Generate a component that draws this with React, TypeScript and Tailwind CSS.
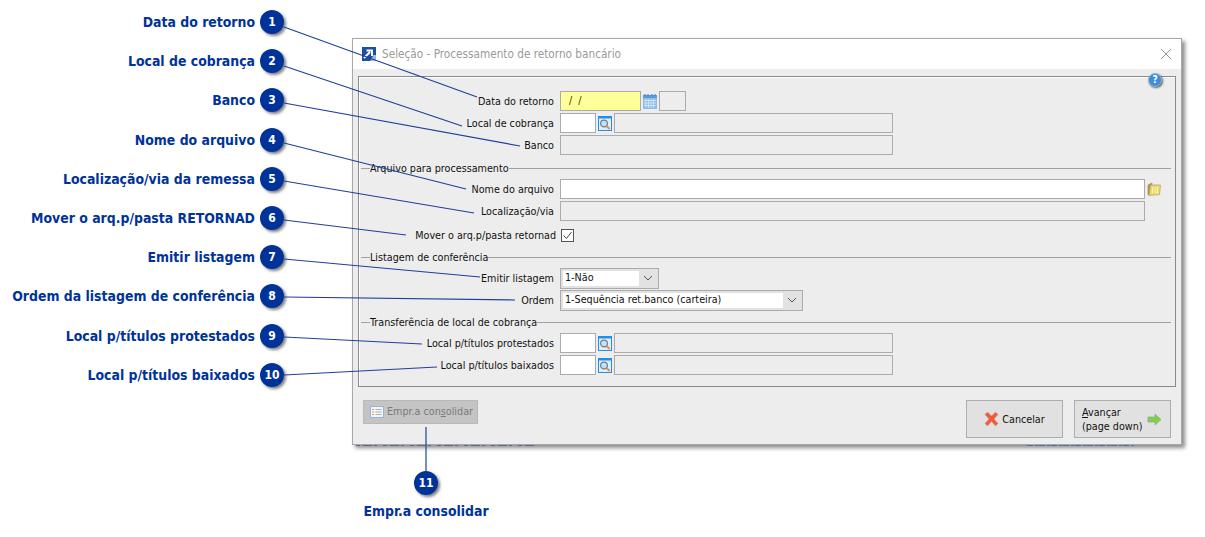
import React from "react";

const callouts = [
  "Data do retorno",
  "Local de cobrança",
  "Banco",
  "Nome do arquivo",
  "Localização/via da remessa",
  "Mover o arq.p/pasta RETORNAD",
  "Emitir listagem",
  "Ordem da listagem de conferência",
  "Local p/títulos protestados",
  "Local p/títulos baixados",
];

const lines = [
  [284, 27, 477, 97],
  [284, 66, 462, 126],
  [284, 103, 520, 146],
  [284, 143, 466, 189],
  [284, 181, 474, 213],
  [284, 220, 406, 235],
  [284, 259, 480, 277],
  [284, 297, 515, 300],
  [284, 337, 422, 344],
  [284, 375, 437, 367],
  [426, 427, 426, 471],
];

function Badge({ n }: { n: number }) {
  return (
    <div className="flex h-[24px] w-[24px] shrink-0 items-center justify-center rounded-full bg-[#003399] text-[12px] font-bold text-white shadow-[2px_2px_3px_rgba(0,0,0,0.5)]">
      {n}
    </div>
  );
}

function Calendar() {
  return (
    <svg width="14" height="15" viewBox="0 0 14 15" className="shrink-0">
      <rect x="0" y="1" width="14" height="14" fill="#8fbbe8" />
      <rect x="0" y="1" width="14" height="3" fill="#5a9bdc" />
      <path d="M2 0v2M5 0v2M9 0v2M12 0v2" stroke="#3f7fc4" strokeWidth="1" />
      <path d="M3 5v9M5.500 5v9M8 5v9M10.500 5v9M1 6.500h12M1 9h12M1 11.500h12" stroke="#d6e8fa" strokeWidth="0.800" />
    </svg>
  );
}

function Search() {
  return (
    <svg width="14" height="15" viewBox="0 0 14 15" className="shrink-0">
      <rect x="0.500" y="0.500" width="13" height="14" fill="#e6eef5" stroke="#1e90f0" />
      <rect x="1" y="1" width="12" height="1.500" fill="#1e90f0" />
      <circle cx="6" cy="7.500" r="3.400" fill="#c5e2f5" stroke="#6f7f8c" strokeWidth="1.200" />
      <path d="M8.500 10l3.200 3" stroke="#f08a3c" strokeWidth="2" />
    </svg>
  );
}

function Folder() {
  return (
    <svg width="14" height="14" viewBox="0 0 14 14" className="shrink-0">
      <path d="M1 3l4-2v10.500L1 13z" fill="#b8973a" stroke="#8d8d70" strokeWidth="0.600" />
      <path d="M2 13.500L3.500 3h10l-1 9.500z" fill="#f3d867" stroke="#a8a27a" strokeWidth="0.700" />
      <path d="M5.500 5v6.500M8 5v6.500M10.500 5v6.500" stroke="#fbf3c0" strokeWidth="1" />
    </svg>
  );
}

function Help() {
  return (
    <div className="flex h-[14px] w-[14px] items-center justify-center rounded-full border border-[#9db4cc] bg-[#3f8ede] text-[10px] font-bold leading-none text-white shadow-[1px_1px_2px_rgba(0,0,0,0.6)]">
      ?
    </div>
  );
}

function Chevron() {
  return (
    <svg width="10" height="6" viewBox="0 0 10 6">
      <path d="M1 1l4 4 4-4" fill="none" stroke="#555555" strokeWidth="1" />
    </svg>
  );
}

const fieldBase = "h-[20px] border border-[#ababab]";

function Row({ label, children, className = "" }: { label: string; children?: React.ReactNode; className?: string }) {
  return (
    <div className={`flex h-[20px] items-center ${className}`}>
      <div className="w-[195px] shrink-0 whitespace-nowrap pt-[2px] text-right">{label}</div>
      <div className="ml-[6px] flex items-center">{children}</div>
    </div>
  );
}

function Legend({ label, className = "" }: { label: string; className?: string }) {
  return (
    <div className={`flex h-[14px] items-center pl-[2px] pr-[4px] ${className}`}>
      <div className="h-px w-[9px] bg-[#a0a0a0]" />
      <div className="whitespace-nowrap pt-[2px]">{label}</div>
      <div className="h-px flex-1 bg-[#a0a0a0]" />
    </div>
  );
}

function Lookup() {
  return (
    <>
      <div className={`${fieldBase} w-[36px] bg-white`} />
      <div className="ml-[2px]"><Search /></div>
      <div className={`${fieldBase} ml-[2px] w-[279px]`} />
    </>
  );
}

export default function App() {
  return (
    <div
      className="relative flex h-[537px] w-[1205px] overflow-hidden bg-white text-[#111111]"
      style={{ fontFamily: '"DejaVu Sans Condensed", "DejaVu Sans", sans-serif' }}
    >
      <div className="flex w-[284px] shrink-0 flex-col gap-[15.2px] pt-[10px]">
        {callouts.map((c, i) => (
          <div key={c} className="flex h-[24px] items-center justify-end gap-[5px]">
            <span className="whitespace-nowrap pt-[1px] text-[13.9px] font-bold text-[#003399]">{c}</span>
            <Badge n={i + 1} />
          </div>
        ))}
      </div>

      <div className="ml-[68px] mt-[38px] flex flex-col">
        <div className="flex h-[407px] w-[830px] flex-col border border-[#a8a8a8] bg-[#ededed] text-[10.7px] shadow-[3px_3px_4px_rgba(0,0,0,0.45)]">
          <div className="flex h-[30px] shrink-0 items-center bg-white pl-[9px] pr-[9px]">
            <svg width="14" height="14" viewBox="0 0 14 14">
              <rect width="14" height="14" fill="#1c4fa0" />
              <path d="M8 14l3-5 3 5zM11 8h3v6h-3z" fill="#9fb6d8" />
              <path d="M2 11l6-6M4.500 3.500H10V9" stroke="#ffffff" strokeWidth="2" fill="none" />
            </svg>
            <span className="ml-[6px] pt-[1px] text-[11.7px] text-[#9a9a9a]">Seleção - Processamento de retorno bancário</span>
            <svg width="12" height="12" viewBox="0 0 12 12" className="ml-auto">
              <path d="M1 1l10 10M11 1L1 11" stroke="#8a8a8a" strokeWidth="0.900" />
            </svg>
          </div>

          <div className="relative mx-[5px] mt-[7px] h-[311px] shrink-0 border border-[#8a8a8a] pt-[14px] shadow-[inset_1px_1px_0_#ffffff]">
            <div className="absolute right-[13px] top-[-4px]"><Help /></div>

            <Row label="Data do retorno">
              <div className={`${fieldBase} flex w-[81px] items-center whitespace-pre bg-[#ffff99] pl-[8px] pt-[1px] text-[#3a3a00]`}>/  /</div>
              <div className="ml-[2px]"><Calendar /></div>
              <div className={`${fieldBase} ml-[2px] w-[27px]`} />
            </Row>
            <Row label="Local de cobrança" className="mt-[2px]"><Lookup /></Row>
            <Row label="Banco" className="mt-[2px]">
              <div className={`${fieldBase} w-[333px]`} />
            </Row>

            <Legend label="Arquivo para processamento" className="mt-[6px]" />
            <Row label="Nome do arquivo" className="mt-[4px]">
              <div className={`${fieldBase} w-[585px] bg-white`} />
              <div className="ml-[2px]"><Folder /></div>
            </Row>
            <Row label="Localização/via" className="mt-[2px]">
              <div className={`${fieldBase} w-[585px]`} />
            </Row>
            <div className="mt-[4px] flex h-[20px] items-center">
              <div className="w-[197px] shrink-0 whitespace-nowrap pt-[2px] text-right">Mover o arq.p/pasta retornad</div>
              <div className="ml-[5px] flex h-[13px] w-[13px] items-center justify-center border border-[#555555] bg-white">
                <svg width="11" height="11" viewBox="0 0 11 11">
                  <path d="M1.500 5.500l3 3 5-6.500" fill="none" stroke="#444444" strokeWidth="1" />
                </svg>
              </div>
            </div>

            <Legend label="Listagem de conferência" className="mt-[5px]" />
            <Row label="Emitir listagem" className="mt-[4px]">
              <div className="flex h-[21px] w-[99px] items-center border border-[#ababab] bg-[#e2e2e2] p-[2px]">
                <div className="flex h-full w-[76px] items-center bg-white pl-[2px] pt-[1px]">1-Não</div>
                <div className="flex flex-1 justify-center"><Chevron /></div>
              </div>
            </Row>
            <Row label="Ordem" className="mt-[2px]">
              <div className="flex h-[21px] w-[243px] items-center border border-[#ababab] bg-[#e2e2e2] p-[2px]">
                <div className="flex h-full w-[220px] items-center bg-white pl-[2px] pt-[1px]">1-Sequência ret.banco (carteira)</div>
                <div className="flex flex-1 justify-center"><Chevron /></div>
              </div>
            </Row>

            <Legend label="Transferência de local de cobrança" className="mt-[5px]" />
            <Row label="Local p/títulos protestados" className="mt-[4px]"><Lookup /></Row>
            <Row label="Local p/títulos baixados" className="mt-[2px]"><Lookup /></Row>
          </div>

          <div className="flex flex-1 items-start pl-[10px] pr-[10px] pt-[13px]">
            <div className="flex h-[24px] w-[115px] items-center border border-[#b8b8b8] bg-[#c4c4c4] pl-[6px] text-[#7a7a7a]">
              <svg width="14" height="12" viewBox="0 0 14 12">
                <rect x="0.500" y="0.500" width="13" height="11" fill="#f4f4f4" stroke="#8fb4e0" />
                <path d="M2 3.500h2M2 6h2M2 8.500h2" stroke="#e8a04a" strokeWidth="1.200" />
                <path d="M5.500 3.500h6M5.500 6h6M5.500 8.500h6" stroke="#b0b0b0" strokeWidth="1" />
              </svg>
              <span className="ml-[3px] whitespace-nowrap pt-[1px]">Empr.a con<u>s</u>olidar</span>
            </div>

            <button className="ml-auto flex h-[38px] w-[97px] items-center justify-center border border-[#adadad] bg-[#e1e1e1]">
              <svg width="15" height="16" viewBox="0 0 15 16">
                <path d="M1 3.500L3.500 1l4 4 4-4L14 3.500l-4 4.500 4 4.500L11.500 15l-4-4.500-4 4.500L1 12.500 5 8z" fill="#ee5a3a" stroke="#c9a08f" strokeWidth="0.600" />
              </svg>
              <span className="ml-[3px] pt-[2px]">Cancelar</span>
            </button>
            <button className="ml-[11px] flex h-[38px] w-[97px] items-center border border-[#adadad] bg-[#e1e1e1] pl-[7px] text-left leading-[14px]">
              <span className="whitespace-nowrap pt-[2px]"><u>A</u>vançar<br />(page down)</span>
              <svg width="15" height="13" viewBox="0 0 15 13" className="ml-[4px]">
                <path d="M1 4h7V1l6 5.500L8 12V9H1z" fill="#7ed24a" stroke="#8fa88a" strokeWidth="0.700" />
              </svg>
            </button>
          </div>
        </div>

        <div className="mt-[26px] flex w-[148px] flex-col items-center">
          <Badge n={11} />
          <span className="mt-[6px] whitespace-nowrap text-[13.9px] font-bold text-[#003399]">Empr.a consolidar</span>
        </div>
      </div>

      <svg className="pointer-events-none absolute left-0 top-0" width="1205" height="537">
        {lines.map(([a, b, c, d], i) => (
          <line key={i} x1={a} y1={b} x2={c} y2={d} stroke="#1f409c" strokeWidth="1.200" />
        ))}
        <line x1="356" y1="445.500" x2="535" y2="445.500" stroke="#5a6a90" strokeWidth="1" strokeDasharray="4 3 9 2 3 6" />
        <line x1="1027" y1="445.500" x2="1135" y2="445.500" stroke="#4a70b0" strokeWidth="1" strokeDasharray="6 2 3 1" />
      </svg>
    </div>
  );
}
